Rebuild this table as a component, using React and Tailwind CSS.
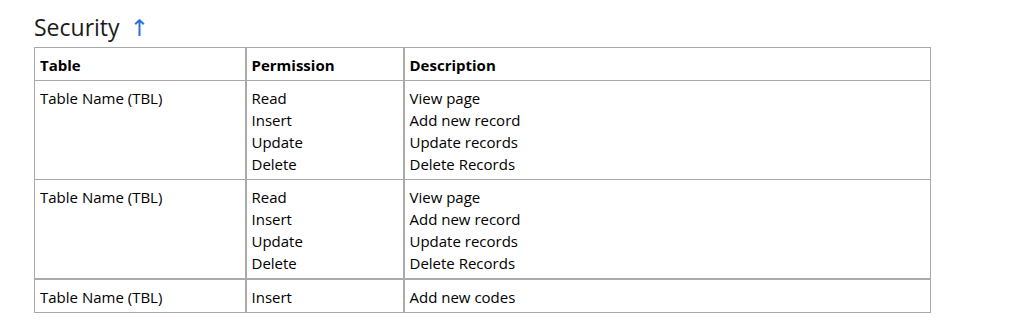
const rows = [
  {
    table: "Table Name (TBL)",
    perms: ["Read", "Insert", "Update", "Delete"],
    descs: ["View page", "Add new record", "Update records", "Delete Records"],
  },
  {
    table: "Table Name (TBL)",
    perms: ["Read", "Insert", "Update", "Delete"],
    descs: ["View page", "Add new record", "Update records", "Delete Records"],
  },
  {
    table: "Table Name (TBL)",
    perms: ["Insert"],
    descs: ["Add new codes"],
  },
];

export default function App() {
  return (
    <div
      className="min-h-[329px] bg-white px-[34px] pt-[10px] text-black"
      style={{ fontFamily: '"Open Sans", "Noto Sans", sans-serif' }}
    >
      <h2 className="flex items-baseline gap-[10px] text-[23px] leading-[35px] font-normal text-[#1a1a1a]">
        Security
        <span className="text-[23px] font-normal text-[#2870d8]" style={{ fontFamily: '"DejaVu Sans", sans-serif' }}>↑</span>
      </h2>
      <table className="mt-[1px] w-[897px] border-collapse border border-[#aaaaaa] text-[15px] leading-[22px]">
        <thead>
          <tr className="h-[33px]">
            <th className="w-[211px] border border-[#aaaaaa] px-[5px] pt-[1px] text-left font-bold">Table</th>
            <th className="w-[158px] border border-[#aaaaaa] border-l-2 px-[5px] pt-[1px] text-left font-bold">Permission</th>
            <th className="border border-[#aaaaaa] border-l-2 px-[5px] pt-[1px] text-left font-bold">Description</th>
          </tr>
        </thead>
        <tbody>
          {rows.map((r, i) => (
            <tr key={i}>
              <td className={`border border-[#aaaaaa] px-[5px] align-top ${i === 2 ? "border-t-2 pt-[6px] pb-[4px]" : "pt-[6px] pb-[4px]"}`}>
                {r.table}
              </td>
              <td className={`border border-[#aaaaaa] border-l-2 px-[5px] align-top ${i === 2 ? "border-t-2 pt-[6px] pb-[4px]" : "pt-[6px] pb-[4px]"}`}>
                {r.perms.map((p) => (
                  <div key={p}>{p}</div>
                ))}
              </td>
              <td className={`border border-[#aaaaaa] border-l-2 px-[5px] align-top ${i === 2 ? "border-t-2 pt-[6px] pb-[4px]" : "pt-[6px] pb-[4px]"}`}>
                {r.descs.map((d) => (
                  <div key={d}>{d}</div>
                ))}
              </td>
            </tr>
          ))}
        </tbody>
      </table>
    </div>
  );
}
